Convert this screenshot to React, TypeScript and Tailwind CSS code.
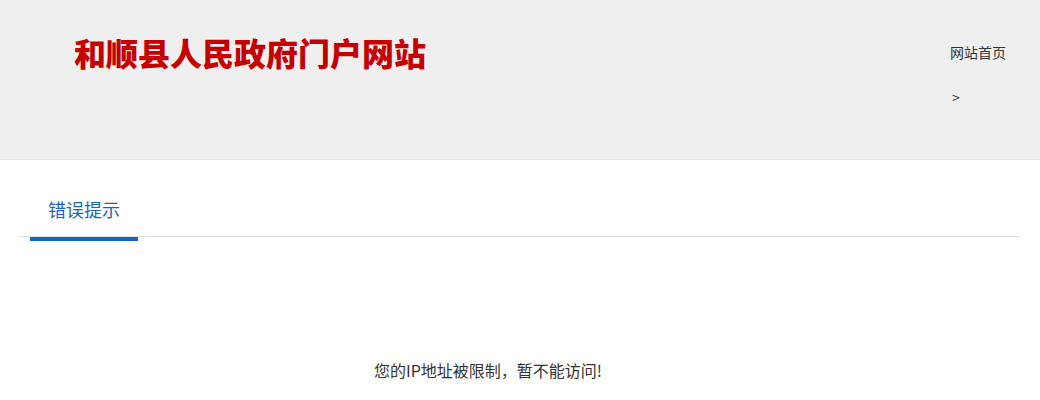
const font = { fontFamily: '"Noto Sans CJK SC", "Noto Sans", sans-serif' }

export default function App() {
    return (
        <div className="min-h-[400px] w-full bg-white text-[#333]" style={font}>
            <header className="flex h-[160px] justify-between border-b border-[#e6e6e6] bg-[#efefef]">
                <h1 className="pl-[74px] pt-[29px] text-[32px] leading-[46px] font-black text-[#c40000]">
                    和顺县人民政府门户网站
                </h1>
                <nav className="flex flex-col pr-[34px] pt-[42px] text-[14px] leading-[21px] text-[#333]">
                    <a href="#">网站首页</a>
                    <span className="mt-[24px] pl-[2px]">&gt;</span>
                </nav>
            </header>

            <div className="pl-[18px] pr-[20px]">
                <div className="flex border-b border-[#e2e2e2] pt-[36px] pb-[14px]">
                    <span className="px-[30px] text-[18px] leading-[26px] text-[#1d63b5]">错误提示</span>
                </div>
                <div className="ml-[12px] h-[4px] w-[108px] bg-[#1565c0]"></div>
            </div>

            <p className="pl-[374px] pt-[117px] text-[16px] leading-[24px] text-[#333]">
                您的IP地址被限制，暂不能访问!
            </p>
        </div>
    )
}
